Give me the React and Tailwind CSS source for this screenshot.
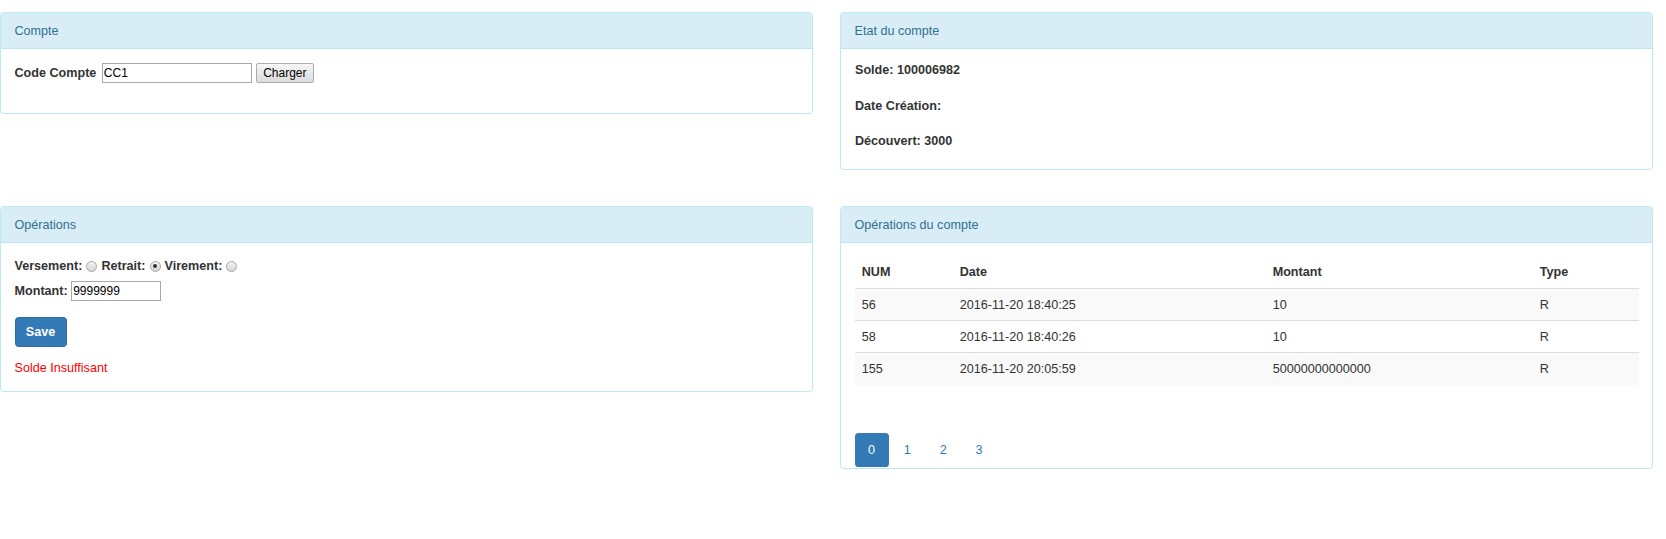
import React from "react";

function Panel({ title, bodyClass, children }) {
  return (
    <div className="border border-[#bce8f1] rounded-[3.6px] overflow-hidden bg-white">
      <div className="h-[36px] bg-[#d9edf7] border-b border-[#bce8f1] px-[13.5px] flex items-center text-[#31708f]">
        {title}
      </div>
      <div className={bodyClass}>{children}</div>
    </div>
  );
}

function Radio({ checked }) {
  return (
    <span className="inline-flex items-center justify-center w-[11px] h-[11px] rounded-full border border-[#a6a6a6] bg-linear-to-b from-[#f4f4f4] to-[#d6d6d6] mx-[4px] align-middle">
      {checked && <span className="w-[4px] h-[4px] rounded-full bg-[#333]" />}
    </span>
  );
}

const rows = [
  { num: "56", date: "2016-11-20 18:40:25", montant: "10", type: "R", striped: true },
  { num: "58", date: "2016-11-20 18:40:26", montant: "10", type: "R", striped: false },
  { num: "155", date: "2016-11-20 20:05:59", montant: "50000000000000", type: "R", striped: true },
];

export default function App() {
  return (
    <div className="w-[1666px] h-[539px] bg-white text-[#333] text-[12.6px] leading-[18px] font-['Liberation_Sans',Arial,sans-serif]">
      <div className="grid grid-cols-[813px_813px] gap-x-[27px] gap-y-[36px] pt-[12px] items-start">
        {/* Compte */}
        <Panel title="Compte" bodyClass="h-[64px] pt-[14px] px-[13.5px]">
          <div className="flex items-center h-[20px]">
            <span className="font-bold">Code Compte</span>
            <div className="ml-[5.5px] w-[150px] h-[20px] border border-[#a9a9a9] px-[1px] flex items-center text-[12px] text-black">
              CC1
            </div>
            <div className="ml-[4px] w-[58px] h-[20px] border border-[#adadad] rounded-[2px] bg-linear-to-b from-[#f6f6f6] to-[#dcdcdc] flex items-center justify-center text-[12px] text-black">
              Charger
            </div>
          </div>
        </Panel>

        {/* Etat du compte */}
        <Panel title="Etat du compte" bodyClass="h-[120px] pt-[12px] px-[14px] flex flex-col gap-[17.5px] font-bold">
          <div className="h-[18px]">Solde: 100006982</div>
          <div className="h-[18px]">Date Création:</div>
          <div className="h-[18px]">Découvert: 3000</div>
        </Panel>

        {/* Opérations */}
        <Panel title="Opérations" bodyClass="h-[148px] pt-[14px] px-[13.5px]">
          <div className="flex items-center h-[18px] font-bold">
            <span>Versement:</span>
            <Radio />
            <span>Retrait:</span>
            <Radio checked />
            <span>Virement:</span>
            <Radio />
          </div>
          <div className="mt-[6px] flex items-center h-[20px]">
            <span className="font-bold">Montant:</span>
            <div className="ml-[3.5px] w-[90px] h-[20px] border border-[#a9a9a9] px-[1px] flex items-center text-[12px] text-black">
              9999999
            </div>
          </div>
          <div className="mt-[16px] w-[52px] h-[30px] bg-[#337ab7] border border-[#2e6da4] rounded-[3.6px] text-white font-bold flex items-center justify-center">
            Save
          </div>
          <div className="mt-[12px] h-[18px] text-[#ff0000]">Solde Insuffisant</div>
        </Panel>

        {/* Opérations du compte */}
        <Panel title="Opérations du compte" bodyClass="h-[225px] pt-[13px] px-[13.5px]">
          <div className="w-[784px]">
            <div className="grid grid-cols-[98px_313px_267px_106px] h-[33px] items-center border-b border-[#dddddd] font-bold">
              <div className="px-[7.2px]">NUM</div>
              <div className="px-[7.2px]">Date</div>
              <div className="px-[7.2px]">Montant</div>
              <div className="px-[7.2px]">Type</div>
            </div>
            {rows.map((r, i) => (
              <div
                key={r.num}
                className={
                  "grid grid-cols-[98px_313px_267px_106px] items-center " +
                  (i < rows.length - 1 ? "h-[32px] border-b border-[#dddddd] " : "h-[32px] ") +
                  (r.striped ? "bg-[#f9f9f9]" : "bg-white")
                }
              >
                <div className="px-[7.2px]">{r.num}</div>
                <div className="px-[7.2px]">{r.date}</div>
                <div className="px-[7.2px]">{r.montant}</div>
                <div className="px-[7.2px]">{r.type}</div>
              </div>
            ))}
          </div>
          <div className="mt-[48px] flex gap-[1.8px]">
            <div className="h-[34px] px-[13.5px] rounded-[3.6px] bg-[#337ab7] text-white flex items-center">0</div>
            <div className="h-[34px] px-[13.5px] rounded-[3.6px] text-[#337ab7] flex items-center">1</div>
            <div className="h-[34px] px-[13.5px] rounded-[3.6px] text-[#337ab7] flex items-center">2</div>
            <div className="h-[34px] px-[13.5px] rounded-[3.6px] text-[#337ab7] flex items-center">3</div>
          </div>
        </Panel>
      </div>
    </div>
  );
}
